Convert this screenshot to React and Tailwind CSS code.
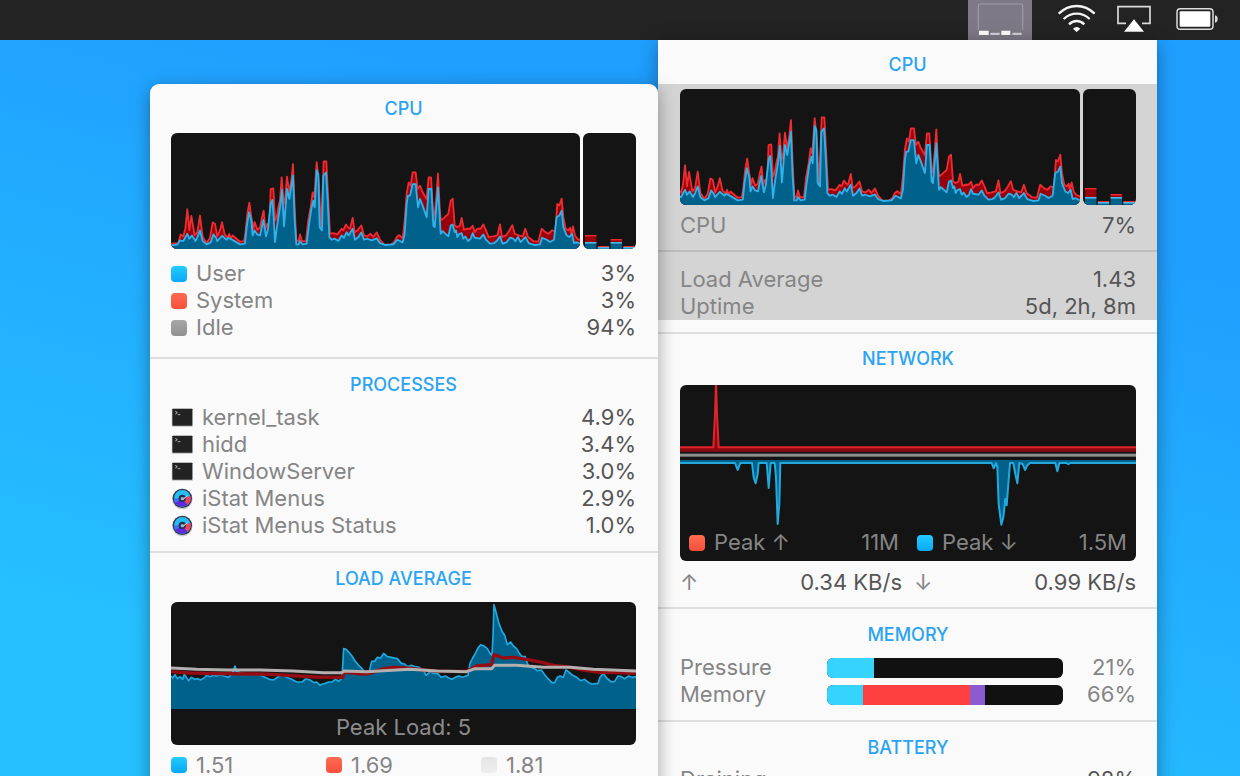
const FONT = "font-['Inter','Liberation_Sans',sans-serif]";

const CPU_TOTAL =
  "33,370 55,368 62,342 70,348 76,325 82,266 88,330 94,286 104,345 112,335 120,285 128,350 140,368 150,352 158,306 165,310 172,348 180,330 186,305 194,342 203,352 208,340 212,354 218,345 226,352 240,364 252,362 256,340 262,280 268,246 274,290 280,325 284,305 292,328 300,322 306,290 311,270 316,325 322,310 328,318 332,205 340,203 345,300 350,290 356,255 360,240 365,170 371,250 376,230 381,168 388,215 394,180 399,130 404,260 409,360 416,362 420,342 426,362 438,362 444,305 452,260 458,215 463,230 470,124 476,180 483,325 488,200 491,122 499,122 505,240 510,340 520,338 532,342 545,325 550,330 558,312 563,320 570,325 578,292 584,335 592,330 604,315 612,345 622,348 632,340 640,350 650,336 660,358 672,372 690,374 702,366 710,350 718,344 728,354 734,300 740,220 746,185 752,195 758,155 767,155 773,205 780,195 788,215 800,235 806,170 813,170 820,290 824,280 829,230 834,158 839,260 842,300 852,292 865,280 872,240 878,234 884,315 892,320 900,315 905,292 912,328 920,325 930,325 938,316 944,335 952,325 962,325 970,312 978,330 986,350 1000,348 1012,345 1020,312 1026,350 1038,345 1048,330 1057,314 1064,340 1076,345 1088,348 1096,325 1104,350 1120,362 1135,364 1145,325 1156,335 1166,340 1176,330 1186,332 1192,250 1198,255 1205,234 1210,290 1217,325 1225,330 1230,322 1234,340 1239,318 1245,345 1252,355 1268,362";

const CPU_USER =
  "33,375 52,373 60,360 70,362 82,340 88,355 96,345 106,362 112,350 120,330 128,362 140,372 152,366 160,342 168,352 172,362 186,346 200,358 205,352 220,360 240,372 255,370 260,320 267,275 274,300 278,345 284,330 292,342 300,345 310,298 318,348 324,325 332,250 337,238 341,290 345,365 352,310 360,260 366,208 372,318 381,205 388,235 399,165 404,300 409,372 416,372 420,362 428,372 440,370 446,320 454,265 460,240 464,260 470,148 475,160 479,320 486,330 490,165 498,155 503,240 508,350 515,358 525,355 535,362 545,345 552,352 560,335 566,345 578,325 585,358 595,350 604,336 612,358 622,355 635,360 650,354 660,368 675,374 700,372 712,358 720,362 728,366 734,340 740,250 744,225 750,225 758,190 767,190 774,260 780,235 788,255 800,290 806,205 814,205 820,315 824,320 834,200 842,340 848,332 865,348 872,315 878,312 884,335 888,330 892,350 898,340 905,338 910,355 916,348 924,362 932,355 938,338 944,352 960,355 970,342 978,358 990,370 1002,368 1010,362 1020,348 1028,370 1040,365 1050,352 1060,355 1066,362 1074,350 1082,365 1096,350 1106,368 1125,374 1140,372 1146,352 1160,358 1170,365 1182,358 1190,290 1198,285 1205,270 1210,320 1220,345 1228,350 1236,340 1242,368 1250,365 1268,374";

const LOAD_1 =
  "63,258 68,264 75,254 82,266 90,260 98,268 103,252 110,264 116,272 124,262 134,268 144,266 152,270 162,264 170,256 180,260 190,256 200,258 210,254 222,258 236,262 246,250 251,240 255,228 260,244 275,250 300,252 325,252 345,262 358,268 370,270 382,262 396,254 410,262 425,268 440,276 456,276 468,266 480,270 492,278 500,276 510,286 518,282 526,280 536,276 546,276 556,268 566,274 576,264 581,176 588,178 598,188 606,198 616,214 626,226 636,236 642,244 650,246 658,244 665,214 674,214 682,202 692,204 701,190 712,200 724,202 734,204 742,206 754,220 764,222 772,230 784,226 796,230 806,232 820,240 828,256 840,246 852,250 862,250 874,262 886,258 896,264 906,268 916,262 926,258 938,262 954,256 960,220 968,204 976,190 984,174 992,164 1002,168 1012,176 1020,190 1026,196 1029,140 1032,44 1038,66 1046,98 1056,124 1064,136 1072,164 1082,156 1090,168 1100,176 1108,190 1116,200 1126,200 1134,226 1144,232 1154,236 1162,242 1174,240 1184,254 1194,266 1206,278 1214,278 1222,262 1230,258 1240,262 1248,240 1256,246 1268,256 1280,262 1292,272 1304,268 1316,278 1326,282 1344,280 1350,262 1360,250 1370,264 1384,276 1394,274 1404,258 1414,260 1424,266 1436,258 1446,262 1458,260";

const LOAD_5 =
  "63,245 120,249 200,251 330,252 380,254 440,258 500,261 578,262 582,246 640,252 660,250 700,236 730,232 770,234 820,240 870,244 950,244 980,228 1025,224 1032,194 1060,204 1090,202 1130,208 1180,218 1210,226 1250,230 1300,240 1350,247 1400,248 1458,250";

const LOAD_15 =
  "63,234 140,238 230,240 330,240 430,243 520,248 576,248 582,243 650,245 700,242 780,238 860,243 950,245 975,236 1025,236 1034,226 1100,226 1180,232 1260,232 1330,238 1458,243";

const NET_DOWN =
  "60,277 225,277 233,298 241,277 276,277 281,320 287,338 293,310 296,277 320,277 326,352 332,277 344,277 348,320 353,460 358,400 361,277 995,277 1001,293 1008,277 1012,290 1016,400 1024,462 1030,440 1036,384 1040,404 1045,340 1050,277 1060,277 1066,310 1072,338 1078,277 1088,280 1095,298 1102,284 1110,277 1186,277 1192,302 1198,277 1220,277 1225,281 1230,277 1430,277";

const NET_UP = "60,230 160,230 165,130 168,30 171,130 176,230 1430,230";

function Title({ children, className }) {
  return (
    <h2 className={`text-center text-[18px] leading-[26px] font-medium text-[#2ba3f3] ${className}`}>
      {children}
    </h2>
  );
}

function Separator({ className = "bg-[#dedede]" }) {
  return <hr className={`h-[2px] border-0 ${className}`} />;
}

function Row({ label, value, children }) {
  return (
    <li className="flex h-[27px] items-center">
      {children}
      <span className="text-[#858585]">{label}</span>
      <span className="ml-auto text-[#555]">{value}</span>
    </li>
  );
}

const SWATCHES = {
  blue: "from-[#22ccff] to-[#0aa8f8]",
  red: "from-[#ff6b50] to-[#f4503c]",
  gray: "from-[#a6a6a6] to-[#919191]",
  light: "from-[#e4e4e4] to-[#efefef]",
};

function Swatch({ color }) {
  return <span className={`mr-[9px] size-4 shrink-0 rounded-[4px] bg-linear-to-b ${SWATCHES[color]}`} />;
}

function CpuHistory({ viewBox }) {
  return (
    <svg
      viewBox={viewBox}
      preserveAspectRatio="none"
      className="h-[116px] min-w-0 flex-1 rounded-[6px] bg-[#141414]"
      role="img"
      aria-label="CPU history"
    >
      <polygon points={`33,390 ${CPU_TOTAL} 1268,390`} fill="#99000b" />
      <polyline points={CPU_TOTAL} fill="none" stroke="#ee2c30" strokeWidth="5.5" strokeLinejoin="round" />
      <polygon points={`33,390 ${CPU_USER} 1268,390`} fill="#00628a" />
      <polyline points={CPU_USER} fill="none" stroke="#2fb2ea" strokeWidth="5.5" strokeLinejoin="round" />
    </svg>
  );
}

function CpuCores({ cores }) {
  return (
    <svg
      viewBox="0 0 53 116"
      className="h-[116px] w-[53px] shrink-0 rounded-[6px] bg-[#141414]"
      role="img"
      aria-label="CPU cores"
    >
      {cores.map(([system, user], i) => {
        const x = 2 + i * 12.8;
        return (
          <g key={i}>
            <rect x={x} y={116 - user - system} width="11.4" height={system} fill="#99000b" />
            <rect x={x} y={116 - user - system} width="11.4" height="1.4" fill="#ee2c30" />
            <rect x={x} y={116 - user} width="11.4" height={user} fill="#00628a" />
            <rect x={x} y={116 - user} width="11.4" height="1.6" fill="#4fb8e8" />
          </g>
        );
      })}
    </svg>
  );
}

function TerminalIcon() {
  return (
    <svg viewBox="0 0 66 60" className="mr-[9px] h-5 w-[22px] shrink-0" aria-hidden="true">
      <rect x="2" y="2" width="64" height="55" rx="3" fill="#cfcfcf" />
      <rect x="4" y="2" width="60" height="51" rx="2" fill="#222" />
      <path d="M13 10l6 4-6 4" fill="none" stroke="#bbb" strokeWidth="3" />
      <path d="M20 20h8" stroke="#aaa" strokeWidth="3" />
    </svg>
  );
}

function IStatIcon() {
  return (
    <svg viewBox="0 0 66 66" className="mr-[9px] size-[22px] shrink-0" aria-hidden="true">
      <circle cx="34" cy="33" r="31" fill="#c9c9cf" />
      <circle cx="34" cy="31" r="29" fill="#34364e" />
      <circle cx="34" cy="31" r="25" fill="#27bdf2" />
      <path d="M34 31L10 38A25 25 0 0 0 50 50Z" fill="#5b2be0" />
      <path d="M34 31L9 31A25 25 0 0 0 13 45Z" fill="#3c74ee" />
      <path d="M34 31L50 50A25 25 0 0 0 58 24Z" fill="#f5405c" />
      <circle cx="34" cy="31" r="11" fill="#24304c" />
      <path d="M32 34L52 21L36 37Z" fill="#dfe4f0" />
      <circle cx="34" cy="32" r="5" fill="#9fb4d0" />
    </svg>
  );
}

function MenuBar() {
  return (
    <header className="flex h-10 shrink-0 justify-end bg-[#232323] pr-[21px]">
      <button type="button" aria-label="CPU" className="h-10 w-16 bg-[#7d7986]">
        <svg viewBox="84 0 192 120" className="size-full">
          <path d="M115 90V17q0-5 5-5h123q5 0 5 5v73" fill="none" stroke="#9f9ba8" strokeWidth="3.5" />
          <path d="M117 92h29v13h-29zM184 92h27v13h-27z" fill="#fff" />
          <path d="M151 98h28v7h-28zM217 98h28v7h-28z" fill="#d2d0d6" />
        </svg>
      </button>
      <button type="button" aria-label="Wi-Fi" className="ml-6 h-10 w-[42px]">
        <svg viewBox="348 0 126 120" className="size-full">
          <g fill="none" stroke="#f4f4f4" strokeWidth="7">
            <path d="M356 41Q380 18 410 18T464 41" />
            <path d="M371 57Q388 41 410 41T449 57" />
            <path d="M387 73Q397 63 410 63T433 73" />
          </g>
          <path d="M399 86q11-10 22 0l-11 10z" fill="#fff" />
        </svg>
      </button>
      <button type="button" aria-label="AirPlay" className="ml-[18px] h-10 w-9">
        <svg viewBox="528 0 108 120" className="size-full">
          <path d="M558 70H534V20H630V70H606" fill="none" stroke="#dcdcdc" strokeWidth="5" />
          <path d="M582 58L612 95H552Z" fill="#fff" />
        </svg>
      </button>
      <button type="button" aria-label="Battery" className="ml-[23px] h-10 w-11">
        <svg viewBox="705 0 132 120" className="size-full">
          <rect x="711" y="26" width="108" height="62" rx="10" fill="none" stroke="#dcdcdc" strokeWidth="4.5" />
          <rect x="719" y="34" width="92" height="46" rx="3" fill="#fff" />
          <path d="M825 46q8 2 8 11t-8 11z" fill="#dcdcdc" />
        </svg>
      </button>
    </header>
  );
}

function CpuPanel() {
  return (
    <section className="relative z-10 mt-11 w-[508px] rounded-t-[9px] bg-[#fafafa] shadow-[0_4px_18px_rgba(0,0,0,0.35)]">
      <div className="pr-[22px] pl-[21px]">
        <Title className="pt-3">CPU</Title>
        <div className="mt-[11px] flex gap-[3px]">
          <CpuHistory viewBox="33 36 1227 350" />
          <CpuCores cores={[[7, 7], [1, 2], [3, 7], [1, 2]]} />
        </div>
        <ul className="mt-[11px] pb-4">
          <Row label="User" value="3%"><Swatch color="blue" /></Row>
          <Row label="System" value="3%"><Swatch color="red" /></Row>
          <Row label="Idle" value="94%"><Swatch color="gray" /></Row>
        </ul>
      </div>
      <Separator />
      <div className="pr-[22px] pl-[21px]">
        <Title className="pt-[13px]">PROCESSES</Title>
        <ul className="mt-[6px] pb-3">
          <Row label="kernel_task" value="4.9%"><TerminalIcon /></Row>
          <Row label="hidd" value="3.4%"><TerminalIcon /></Row>
          <Row label="WindowServer" value="3.0%"><TerminalIcon /></Row>
          <Row label="iStat Menus" value="2.9%"><IStatIcon /></Row>
          <Row label="iStat Menus Status" value="1.0%"><IStatIcon /></Row>
        </ul>
      </div>
      <Separator />
      <div className="pr-[22px] pl-[21px]">
        <Title className="pt-[13px]">LOAD AVERAGE</Title>
        <div className="mt-[10px] overflow-hidden rounded-[6px] bg-[#141414]">
          <svg viewBox="63 36 1395 324" preserveAspectRatio="none" className="block h-[108px] w-full" role="img" aria-label="Load history">
            <polygon points={`63,357 ${LOAD_1} 1458,357`} fill="#00628a" />
            <polyline points={LOAD_1} fill="none" stroke="#1fa9e0" strokeWidth="5" strokeLinejoin="round" />
            <polyline points={LOAD_5} fill="none" stroke="#960c12" strokeWidth="10" strokeLinejoin="round" />
            <polyline points={LOAD_15} fill="none" stroke="#b4b0b0" strokeWidth="9" strokeLinejoin="round" />
          </svg>
          <p className="py-1 text-center leading-[27px] text-[#8c8c8c]">Peak Load: 5</p>
        </div>
        <ul className="mt-2 grid grid-cols-3 pb-4 leading-[22px] text-[#858585]">
          <li className="flex h-6 items-center"><Swatch color="blue" />1.51</li>
          <li className="flex h-6 items-center"><Swatch color="red" />1.69</li>
          <li className="flex h-6 items-center"><Swatch color="light" />1.81</li>
        </ul>
      </div>
    </section>
  );
}

function Meter({ label, value, parts }) {
  return (
    <li className="grid h-[27px] grid-cols-[147px_1fr_73px] items-center text-[#858585]">
      <span>{label}</span>
      <span className="flex h-5 overflow-hidden rounded-[6px] bg-[#111]">
        {parts.map(([color, width]) => (
          <span key={color} className={color} style={{ width: `${width}%` }} />
        ))}
      </span>
      <span className="text-right">{value}</span>
    </li>
  );
}

function MainPanel() {
  return (
    <section className="w-[499px] bg-[#fafafa] shadow-[0_4px_18px_rgba(0,0,0,0.35)]">
      <Title className="pt-3 pb-[6px]">CPU</Title>
      <div className="bg-[#d4d4d4]">
        <div className="flex gap-[3px] pt-[5px] pr-[21px] pl-[22px]">
          <CpuHistory viewBox="67 36 1197 350" />
          <CpuCores cores={[[9, 8], [1, 3], [3, 8], [1, 3]]} />
        </div>
        <ul className="pt-[7px] pr-[21px] pb-[11px] pl-[22px]">
          <Row label="CPU" value="7%" />
        </ul>
        <Separator className="bg-[#bdbdbd]" />
        <ul className="pt-[14px] pr-[21px] pl-[22px]">
          <Row label="Load Average" value="1.43" />
          <Row label="Uptime" value="5d, 2h, 8m" />
        </ul>
      </div>
      <Separator className="mt-3 bg-[#dedede]" />
      <div className="pr-[21px] pl-[22px]">
        <Title className="pt-3">NETWORK</Title>
        <div className="mt-[13px] overflow-hidden rounded-[6px] bg-[#141414]">
          <svg viewBox="60 43 1368 432" preserveAspectRatio="none" className="block h-36 w-full" role="img" aria-label="Network history">
            <polygon points={`60,243 ${NET_UP} 1430,243`} fill="#8a0a10" />
            <polyline points={NET_UP} fill="none" stroke="#e0242a" strokeWidth="6" />
            <rect x="60" y="249" width="1370" height="9" fill="#8f8f8f" />
            <polygon points={`60,268 ${NET_DOWN} 1430,268`} fill="#00628a" />
            <polyline points={NET_DOWN} fill="none" stroke="#22a9de" strokeWidth="6" strokeLinejoin="round" />
          </svg>
          <ul className="grid grid-cols-2 pb-[5px] text-[#858585]">
            <li className="flex h-[27px] items-center px-[9px]">
              <Swatch color="red" />Peak ↑<span className="ml-auto">11M</span>
            </li>
            <li className="flex h-[27px] items-center px-[9px]">
              <Swatch color="blue" />Peak ↓<span className="ml-auto">1.5M</span>
            </li>
          </ul>
        </div>
        <ul className="grid grid-cols-2 gap-x-3 pt-2 pb-[11px]">
          <Row label="↑" value="0.34 KB/s" />
          <Row label="↓" value="0.99 KB/s" />
        </ul>
      </div>
      <Separator />
      <div className="pr-[21px] pl-[22px]">
        <Title className="pt-[13px]">MEMORY</Title>
        <ul className="pt-[6px] pb-3">
          <Meter label="Pressure" value="21%" parts={[["bg-[#37d3ff]", 20]]} />
          <Meter label="Memory" value="66%" parts={[["bg-[#37d3ff]", 15.4], ["bg-[#ff4040]", 45.4], ["bg-[#8c5bd0]", 6.2]]} />
        </ul>
      </div>
      <Separator />
      <div className="pr-[21px] pl-[22px]">
        <Title className="pt-[13px]">BATTERY</Title>
        <ul className="pt-[5px] pb-4">
          <Row label="Draining" value="98%" />
        </ul>
      </div>
    </section>
  );
}

export default function App() {
  return (
    <div className={`flex h-screen flex-col overflow-hidden bg-linear-[15deg] from-[#26c0ff] from-15% to-[#1f9fff] to-75% text-[22px] leading-[27px] ${FONT}`}>
      <MenuBar />
      <main className="flex min-h-0 flex-1 items-start justify-end pr-[83px]">
        <CpuPanel />
        <MainPanel />
      </main>
    </div>
  );
}
